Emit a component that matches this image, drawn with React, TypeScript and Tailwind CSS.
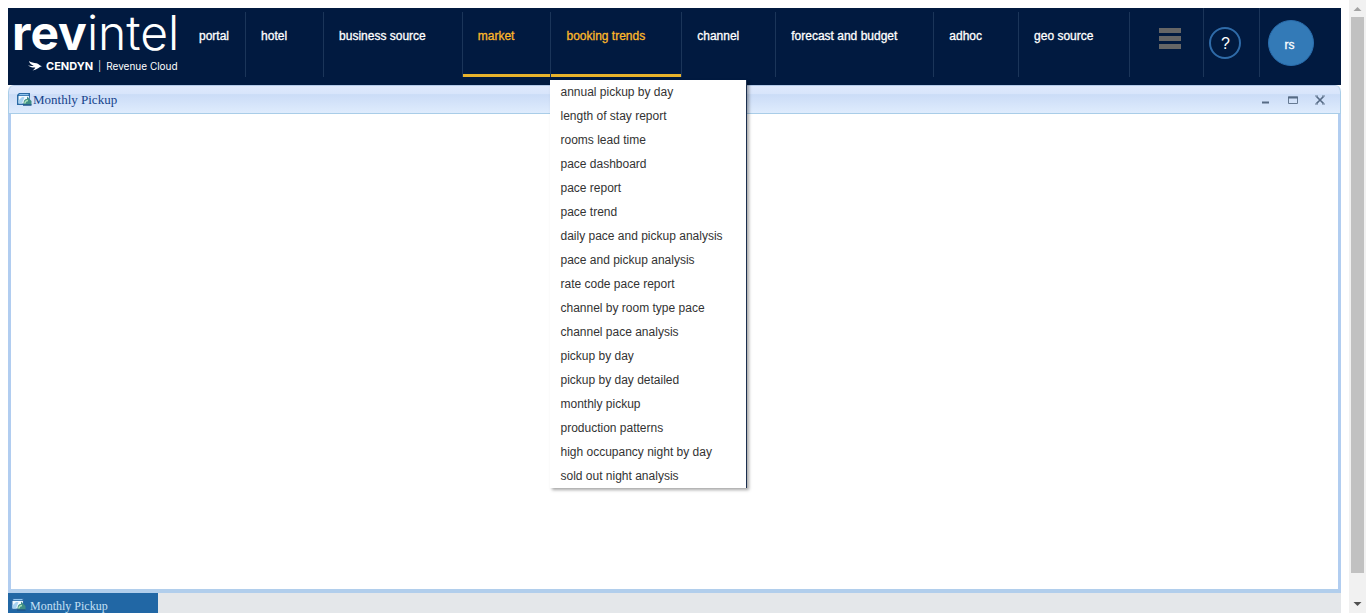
import React from "react";

const before = ["hotel", "business source"];
const after = ["channel", "forecast and budget", "adhoc", "geo source"];

const reports = [
  "annual pickup by day",
  "length of stay report",
  "rooms lead time",
  "pace dashboard",
  "pace report",
  "pace trend",
  "daily pace and pickup analysis",
  "pace and pickup analysis",
  "rate code pace report",
  "channel by room type pace",
  "channel pace analysis",
  "pickup by day",
  "pickup by day detailed",
  "monthly pickup",
  "production patterns",
  "high occupancy night by day",
  "sold out night analysis",
];

function ReportIcon() {
  return (
    <svg width="16" height="16" viewBox="0 0 16 16" aria-hidden="true" className="shrink-0">
      <path d="M1 3 3 1h11v3l-1 9H1z" fill="#2b6aa5" />
      <path d="M2.500 4h10.500l-1 7.500H2.500z" fill="#f2f9ff" />
      <path d="M3.500 2h9v1.300H3z" fill="#8fc3ee" />
      <path d="M2.500 11.500V8.500L6 5h2.500L6 11.500z" fill="#a9d3f2" />
      <path d="M7.500 12c0-3.500 1-5 3.500-5V4.500l4.500 4.500v4H7.500z" fill="#3f8d86" />
      <path d="M8.800 11.500c.3-2 1.200-3 3.200-3" fill="none" stroke="#a5e0b4" strokeWidth="1.500" />
      <path d="M7 13h8.500" stroke="#1f568c" strokeWidth="1.500" />
    </svg>
  );
}

function Logo() {
  return (
    <a href="#home" aria-label="revintel" className="flex w-44 shrink-0 flex-col text-white">
      <span className="pl-1 font-[Inter,sans-serif] text-[48px] leading-[50px] font-light whitespace-nowrap">
        <b className="font-bold">rev</b>intel
      </span>
      <span className="flex items-center pl-5 font-[Inter,sans-serif] text-[10px] leading-4 whitespace-nowrap">
        <svg width="14" height="10" viewBox="0 0 14 10" aria-hidden="true" className="mr-1">
          <path d="M1 0c2 1.800 5 1.600 7.500 2.300C10.500 3 11 4.200 14 5.200 11 5.600 10 8.500 4.500 9.500 6 8.500 7 7.500 7.300 6.500 5 6.700 2 6.500 0 4.300c2 .8 4 .8 5.800.5C3.500 4 1.500 2.500 1 0z" fill="#fff" />
        </svg>
        <b className="text-[11px] font-bold">CENDYN</b>
        <span className="mx-[5px] font-light">|</span>
        <span>Revenue Cloud</span>
      </span>
    </a>
  );
}

function NavItem({ label, active = false, children }: { label: string; active?: boolean; children?: React.ReactNode }) {
  return (
    <li
      className={
        active
          ? "relative flex border-r border-r-[#1b3559] text-[#fdb82a] shadow-[inset_0_-3px_0_#e8b32c]"
          : "relative flex border-r border-r-[#1b3559] text-white"
      }
    >
      <a href="#menu" className="pt-4 pr-9 pl-[15px] leading-4 whitespace-nowrap [-webkit-text-stroke:0.3px]">
        {label}
      </a>
      {children}
    </li>
  );
}

export default function App() {
  return (
    <div className="flex h-screen bg-white font-['Liberation_Sans',Arial,sans-serif] text-[12px]">
      <div className="flex min-w-0 flex-1 flex-col pt-2 pr-2 pl-2">
        <header className="flex h-[77px] shrink-0 bg-[#011a40]">
          <Logo />
          <nav className="flex pt-1 pb-2">
            <ul className="flex">
              <li className="flex border-r border-r-[#1b3559] text-white">
                <a href="#portal" className="pt-4 pr-4 pl-[15px] leading-4 [-webkit-text-stroke:0.3px]">portal</a>
              </li>
              {before.map((n) => <NavItem key={n} label={n} />)}
              <NavItem label="market" active />
              <NavItem label="booking trends" active>
                <ul className="absolute top-[68px] -left-px z-10 w-[197px] border-r border-r-[#1b2f4f] bg-white text-[#333] shadow-[2px_2px_3px_rgba(0,0,0,0.35)]">
                  {reports.map((r) => (
                    <li key={r}>
                      <a href="#report" className="block pl-[10px] leading-6 whitespace-nowrap">{r}</a>
                    </li>
                  ))}
                </ul>
              </NavItem>
              {after.map((n) => <NavItem key={n} label={n} />)}
            </ul>
          </nav>
          <div className="ml-auto flex shrink-0 pb-2">
            <button type="button" aria-label="Menu" className="flex w-[74px] flex-col items-center gap-[3px] border-r border-r-[#1b3559] pt-5 pl-[6px]">
              <span className="h-[5px] w-[22px] bg-[#666]" />
              <span className="h-[5px] w-[22px] bg-[#666]" />
              <span className="h-[5px] w-[22px] bg-[#666]" />
            </button>
            <div className="flex w-14 border-r border-r-[#1b3559] pt-[19px] pl-[5px]">
              <button type="button" aria-label="Help" className="size-8 rounded-full border-2 border-[#2f6ba8] pt-[2px] text-[16px] leading-6 text-white">?</button>
            </div>
            <div className="w-[82px] pt-3 pl-2">
              <button type="button" className="size-[46px] rounded-full border border-[#2a6eae] bg-[#337ab7] pt-1 pr-1 text-[12px] text-white [-webkit-text-stroke:0.3px]">rs</button>
            </div>
            <div className="w-[2px]" />
          </div>
        </header>
        <main className="flex flex-1 flex-col rounded-t-md border-t border-t-[#b3c9e8]">
          <div className="flex h-7 shrink-0 items-center gap-px rounded-t-md border-x border-b border-[#a9cde8] bg-[linear-gradient(#dfe9fc_0%,#d8e5fb_28%,#cbdcf7_32%,#dfecfd_100%)] pr-[15px] pl-[7px]">
            <ReportIcon />
            <h1 className="font-['Liberation_Serif',serif] text-[13px] text-[#15428b]">Monthly Pickup</h1>
            <div className="ml-auto flex items-center gap-[17px]">
              <button type="button" aria-label="Minimize">
                <svg width="10" height="10" viewBox="0 0 10 10"><path d="M1 7.500h7" stroke="#566b85" strokeWidth="2" /></svg>
              </button>
              <button type="button" aria-label="Maximize">
                <svg width="10" height="10" viewBox="0 0 10 10"><path d="M.5 2h9v6.500h-9z" fill="none" stroke="#667a93" /><path d="M0 2.500h10" stroke="#566b85" strokeWidth="2" /></svg>
              </button>
              <button type="button" aria-label="Close">
                <svg width="10" height="10" viewBox="0 0 10 10"><path d="m1.500 1.500 7 7m0-7-7 7" stroke="#566b85" strokeWidth="1.700" /><path d="M0 1h3M7 1h3M0 9h3M7 9h3" stroke="#667a93" /></svg>
              </button>
            </div>
          </div>
          <div className="flex-1 border-x-[3px] border-b-4 border-[#b1cdf0] border-b-[#b1ceec] bg-white" />
        </main>
        <footer className="flex h-5 shrink-0 overflow-hidden bg-[#e4e7ea]">
          <button type="button" className="flex w-[150px] items-start gap-1 bg-[#2167a5] pt-1 pl-[2px] font-['Liberation_Serif',serif] text-[12px] text-[#c5e0f5]">
            <ReportIcon />
            <span className="leading-[18px]">Monthly Pickup</span>
          </button>
        </footer>
      </div>
      <div className="flex w-[17px] shrink-0 flex-col items-center bg-[#f1f1f1]" aria-hidden="true">
        <svg width="17" height="17" viewBox="0 0 17 17" className="shrink-0"><path d="m4.500 11 4-4 4 4z" fill="#a3a3a3" /></svg>
        <div className="w-[13px] flex-1 bg-[#c1c1c1]" />
        <svg width="17" height="40" viewBox="0 0 17 40" className="shrink-0"><path d="m4.500 29 4 4 4-4z" fill="#505050" /></svg>
      </div>
    </div>
  );
}
